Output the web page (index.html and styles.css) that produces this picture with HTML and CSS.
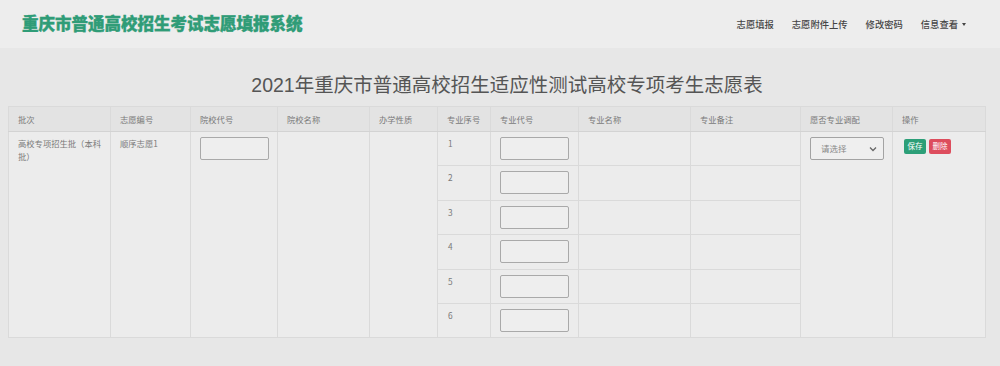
FILE: index.html
```html
<!DOCTYPE html>
<html lang="zh">
<head>
<meta charset="utf-8">
<title>重庆市普通高校招生考试志愿填报系统</title>
<link rel="stylesheet" href="styles.css">
</head>
<body>
<header class="navbar">
  <div class="brand">重庆市普通高校招生考试志愿填报系统</div>
  <nav class="nav">
    <a class="nav-link">志愿填报</a>
    <a class="nav-link">志愿附件上传</a>
    <a class="nav-link">修改密码</a>
    <a class="nav-link">信息查看<span class="caret"></span></a>
  </nav>
</header>
<main class="content">
  <h1 class="page-title">2021年重庆市普通高校招生适应性测试高校专项考生志愿表</h1>
  <table class="form-table">
    <colgroup>
      <col class="c1"><col class="c2"><col class="c3"><col class="c4"><col class="c5"><col class="c6"><col class="c7"><col class="c8"><col class="c9"><col class="c10"><col class="c11">
    </colgroup>
    <thead>
      <tr>
        <th>批次</th><th>志愿编号</th><th>院校代号</th><th>院校名称</th><th>办学性质</th><th>专业序号</th><th>专业代号</th><th>专业名称</th><th>专业备注</th><th>愿否专业调配</th><th>操作</th>
      </tr>
    </thead>
    <tbody>
      <tr>
        <td rowspan="6" class="batch">高校专项招生批（本科批）</td>
        <td rowspan="6">顺序志愿1</td>
        <td rowspan="6" class="input-cell"><div class="box"></div></td>
        <td rowspan="6"></td>
        <td rowspan="6"></td>
        <td class="num">1</td>
        <td class="input-cell"><div class="box"></div></td>
        <td></td><td></td>
        <td rowspan="6" class="input-cell">
          <div class="select"><span>请选择</span><svg width="8" height="6" viewBox="0 0 8 6"><path d="M1 1.5 L4 4.5 L7 1.5" fill="none" stroke="#666" stroke-width="1.3"/></svg></div>
        </td>
        <td rowspan="6" class="ops"><span class="btn btn-save">保存</span><span class="btn btn-del">删除</span></td>
      </tr>
      <tr><td class="num">2</td><td class="input-cell"><div class="box"></div></td><td></td><td></td></tr>
      <tr><td class="num">3</td><td class="input-cell"><div class="box"></div></td><td></td><td></td></tr>
      <tr><td class="num">4</td><td class="input-cell"><div class="box"></div></td><td></td><td></td></tr>
      <tr><td class="num">5</td><td class="input-cell"><div class="box"></div></td><td></td><td></td></tr>
      <tr><td class="num">6</td><td class="input-cell"><div class="box"></div></td><td></td><td></td></tr>
    </tbody>
  </table>
</main>
</body>
</html>
```
FILE: styles.css
```css
html, body {
  margin: 0;
  padding: 0;
}
body {
  background: #e7e7e7;
  font-family: "Liberation Sans", "Noto Sans CJK SC", sans-serif;
  color: #666;
  width: 1000px;
  height: 366px;
  overflow: hidden;
}
.navbar {
  height: 48px;
  background: #ededed;
  display: flex;
  align-items: center;
  justify-content: space-between;
  padding: 0 34px 0 22px;
}
.brand {
  font-family: "Noto Sans CJK SC", sans-serif;
  font-weight: 900;
  font-size: 16.5px;
  color: #2f9c77;
  letter-spacing: 0;
  line-height: 1;
  margin-top: -2px;
  -webkit-text-stroke: 0.4px #2f9c77;
}
.nav {
  display: flex;
  gap: 18px;
  align-items: center;
}
.nav-link {
  font-family: "Noto Sans CJK SC", sans-serif;
  font-size: 9.3px;
  color: #444;
  font-weight: 500;
  display: flex;
  align-items: center;
}
.caret {
  display: inline-block;
  width: 0;
  height: 0;
  border-left: 2.5px solid transparent;
  border-right: 2.5px solid transparent;
  border-top: 3px solid #444;
  margin-left: 4px;
}
.content {
  padding: 0 0 0 8px;
}
.page-title {
  margin: 0;
  height: 58px;
  display: flex;
  align-items: center;
  justify-content: center;
  font-size: 19.5px;
  font-weight: normal;
  color: #555;
  padding-left: 6px;
  padding-top: 13px;
  box-sizing: border-box;
}
.form-table {
  border-collapse: collapse;
  table-layout: fixed;
  width: 977px;
  background: #ececec;
  font-family: "Noto Sans CJK SC", sans-serif;
  font-size: 8.3px;
  color: #7a7a7a;
}
.c1 { width: 102px; }
.c2 { width: 80px; }
.c3 { width: 87px; }
.c4 { width: 92px; }
.c5 { width: 68px; }
.c6 { width: 53px; }
.c7 { width: 88px; }
.c8 { width: 112px; }
.c9 { width: 110px; }
.c10 { width: 92px; }
.c11 { width: 93px; }
.form-table th,
.form-table td {
  border: 1px solid #dadada;
  text-align: left;
  vertical-align: top;
  padding: 5px 9px;
  line-height: 12.5px;
}
.form-table th {
  background: #e3e3e3;
  font-weight: normal;
  height: 25px;
  box-sizing: border-box;
  vertical-align: middle;
  padding-top: 4px;
  padding-bottom: 4px;
  border-bottom: 1px solid #d3d3d3;
}
.form-table tbody tr {
  height: 34.4px;
}
.form-table td.batch {
  padding-right: 4px;
}
.form-table td.num {
  padding-left: 10px;
}
.form-table td.input-cell {
  padding: 5px 9px 0 9px;
}
.box {
  width: 69px;
  height: 23px;
  box-sizing: border-box;
  border: 1px solid #a9a9a9;
  border-radius: 2px;
  background: #eeeeee;
}
.select {
  width: 74px;
  height: 23px;
  box-sizing: border-box;
  border: 1px solid #a3a3a3;
  border-radius: 2px;
  background: #efefef;
  display: flex;
  align-items: center;
  justify-content: space-between;
  padding: 0 6px 0 10px;
  font-size: 8.5px;
  color: #888;
}
.form-table td.ops {
  padding: 7px 0 0 11px;
}
.btn {
  display: inline-flex;
  align-items: center;
  justify-content: center;
  height: 15px;
  width: 22px;
  border-radius: 2px;
  color: #fff;
  font-size: 7.5px;
  margin-right: 3px;
  vertical-align: top;
}
.btn-save { background: #2c9f78; }
.btn-del { background: #dd4d5d; }
```
